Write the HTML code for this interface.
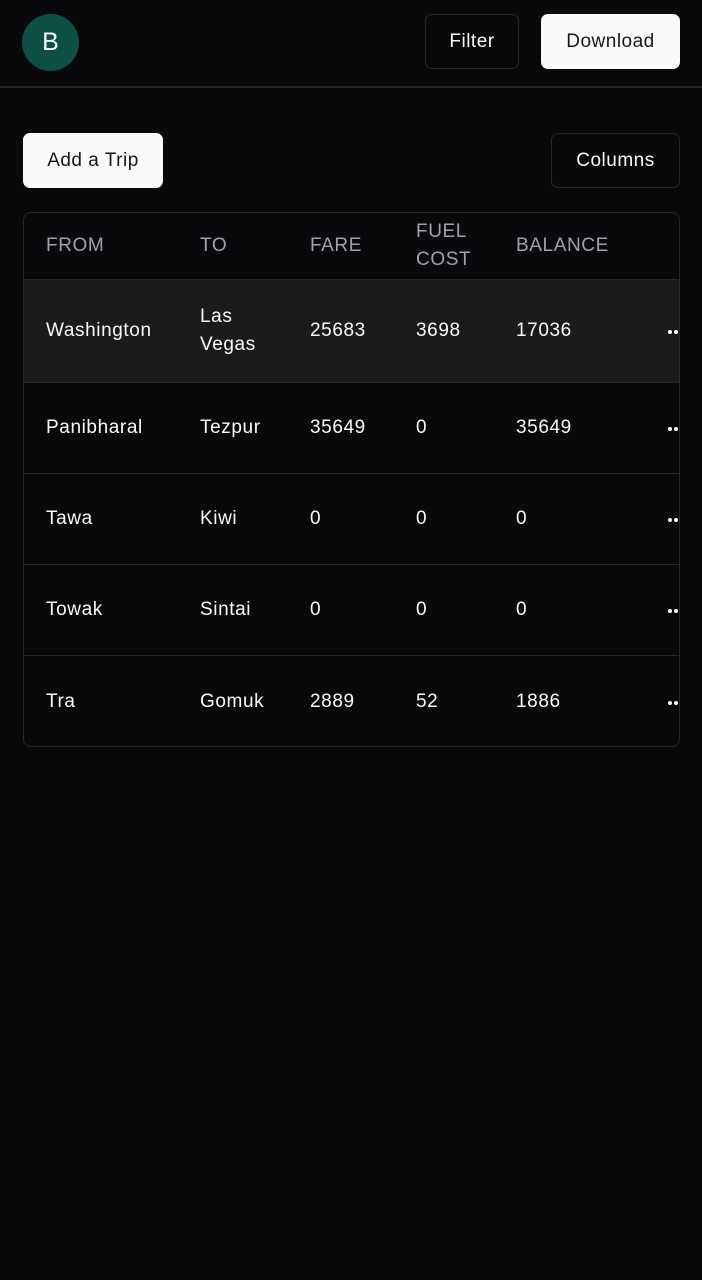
<!DOCTYPE html>
<html><head><style>
*{margin:0;padding:0;box-sizing:border-box}
body{width:702px;height:1280px;background:#09090b;font-family:"Liberation Sans",sans-serif;color:#fafafa;position:relative;overflow:hidden}
.a{position:absolute}
.btn{position:absolute;border:1px solid #27272a;border-radius:7px;display:flex;align-items:center;justify-content:center;font-size:19px;letter-spacing:0.5px}
.w{background:#fafafa;color:#18181b;border-color:#fafafa}
.t{position:absolute;left:23px;top:212px;width:657px;height:535px;border:1px solid #27272a;border-radius:8px;overflow:hidden}
.r{position:absolute;left:0;width:657px;border-bottom:1px solid #27272a}
.c{position:absolute;font-size:19px;top:50%;transform:translateY(-50%);line-height:28px;letter-spacing:0.6px}
.h .c{color:#a1a1aa}
.d{position:absolute;left:644px;top:50%;width:11px;height:4px;margin-top:-1px}
.d:before,.d:after{content:"";position:absolute;top:0;width:4px;height:4px;border-radius:50%;background:#fafafa}
.d:before{left:0}.d:after{left:6px}
</style></head><body>
<div class="a" style="left:22px;top:14px;width:57px;height:57px;border-radius:50%;background:#0f5045;display:flex;align-items:center;justify-content:center;font-size:25px">B</div>
<div class="btn" style="left:425px;top:14px;width:94px;height:55px">Filter</div>
<div class="btn w" style="left:541px;top:14px;width:139px;height:55px">Download</div>
<div class="a" style="left:0;top:86px;width:702px;height:2px;background:#27272a"></div>
<div class="btn w" style="left:23px;top:133px;width:140px;height:55px">Add a Trip</div>
<div class="btn" style="left:551px;top:133px;width:129px;height:55px">Columns</div>
<div class="t">
<div class="r h" style="top:0;height:67px"><div class="c" style="left:22px">FROM</div><div class="c" style="left:176px">TO</div><div class="c" style="left:286px">FARE</div><div class="c" style="left:392px">FUEL<br>COST</div><div class="c" style="left:492px">BALANCE</div></div>
<div class="r" style="top:67px;height:103px;background:#1b1b1e"><div class="c" style="left:22px">Washington</div><div class="c" style="left:176px">Las<br>Vegas</div><div class="c" style="left:286px">25683</div><div class="c" style="left:392px">3698</div><div class="c" style="left:492px">17036</div><div class="d"></div></div>
<div class="r" style="top:170px;height:91px"><div class="c" style="left:22px">Panibharal</div><div class="c" style="left:176px">Tezpur</div><div class="c" style="left:286px">35649</div><div class="c" style="left:392px">0</div><div class="c" style="left:492px">35649</div><div class="d"></div></div>
<div class="r" style="top:261px;height:91px"><div class="c" style="left:22px">Tawa</div><div class="c" style="left:176px">Kiwi</div><div class="c" style="left:286px">0</div><div class="c" style="left:392px">0</div><div class="c" style="left:492px">0</div><div class="d"></div></div>
<div class="r" style="top:352px;height:91px"><div class="c" style="left:22px">Towak</div><div class="c" style="left:176px">Sintai</div><div class="c" style="left:286px">0</div><div class="c" style="left:392px">0</div><div class="c" style="left:492px">0</div><div class="d"></div></div>
<div class="r" style="top:443px;height:91px;border-bottom:none"><div class="c" style="left:22px">Tra</div><div class="c" style="left:176px">Gomuk</div><div class="c" style="left:286px">2889</div><div class="c" style="left:392px">52</div><div class="c" style="left:492px">1886</div><div class="d"></div></div>
</div>
</body></html>
